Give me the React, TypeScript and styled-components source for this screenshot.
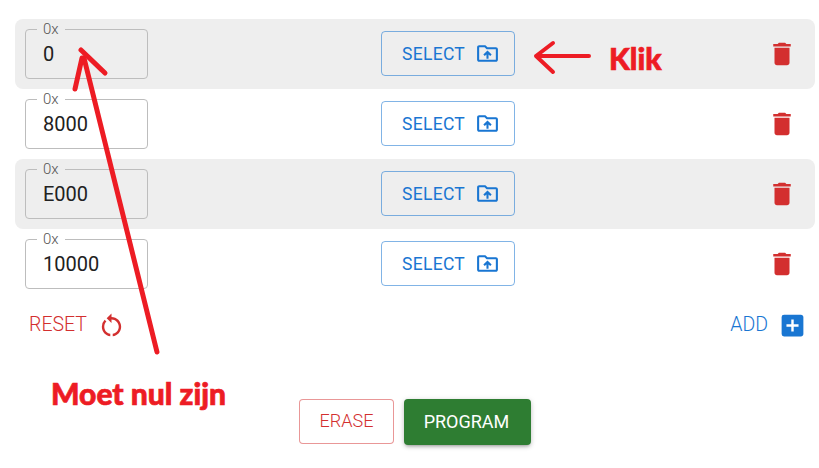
import React from 'react';
import styled, { createGlobalStyle } from 'styled-components';
import { MdAddBox, MdDelete, MdOutlineDriveFolderUpload, MdRestartAlt } from 'react-icons/md';

const GlobalStyle = createGlobalStyle`
    html, body {
        margin: 0;
        background: #fff;
    }
    body {
        font-family: Roboto, "Liberation Sans", sans-serif;
    }
`;

const colors = {
    blue: '#1976d2',
    red: '#d32f2f',
    green: '#2e7d32',
    grey: '#eeeeee',
};

const Page = styled.div`
    position: relative;
    width: 819px;
    height: 468px;
    overflow: hidden;
    padding: 19px 4px 0 15px;
    box-sizing: border-box;
`;

const Row = styled.div<{ $shaded?: boolean }>`
    display: flex;
    align-items: center;
    height: 70px;
    padding: 0 18px 0 10px;
    border-radius: 8px;
    background: ${p => (p.$shaded ? colors.grey : 'transparent')};
`;

const AddressField = styled.fieldset`
    align-self: flex-start;
    width: 123px;
    height: 58px;
    margin: 2px 0 0;
    padding: 0 0 0 12px;
    box-sizing: border-box;
    border: 1px solid #bdbdbd;
    border-radius: 4px;
    display: block;
`;

const AddressLegend = styled.legend`
    padding: 0 6px;
    margin-left: -1px;
    font-size: 15px;
    line-height: 16px;
    font-weight: 300;
    color: #555;
`;

const AddressInput = styled.input`
    display: block;
    width: 100%;
    height: 34px;
    margin: 0;
    padding: 0 0 1px 5px;
    box-sizing: border-box;
    border: 0;
    outline: 0;
    background: transparent;
    font-family: inherit;
    font-size: 20px;
    color: #212121;
`;

const SelectButton = styled.button`
    display: flex;
    align-items: center;
    gap: 10px;
    width: 134px;
    height: 45px;
    margin: 0 0 1px 233px;
    padding: 0 0 0 20px;
    box-sizing: border-box;
    border: 1px solid rgba(25, 118, 210, 0.55);
    border-radius: 4px;
    background: transparent;
    font-family: inherit;
    font-size: 17.5px;
    letter-spacing: 0.3px;
    color: ${colors.blue};
`;

const DeleteButton = styled.button`
    display: flex;
    margin-left: auto;
    padding: 0;
    border: 0;
    background: transparent;
    color: ${colors.red};
`;

const Actions = styled.div`
    display: flex;
    justify-content: space-between;
    align-items: center;
    height: 52px;
    margin-top: 0;
    padding: 0 8px 0 14px;
`;

const TextAction = styled.button<{ $color: string }>`
    display: flex;
    align-items: center;
    gap: 10px;
    padding: 0;
    border: 0;
    background: transparent;
    font-family: inherit;
    font-size: 19.5px;
    font-weight: 300;
    color: ${p => p.$color};
`;

const ActionLabel = styled.span`
    margin-top: -1px;
`;

const Footer = styled.div`
    display: flex;
    justify-content: center;
    gap: 10px;
    margin-top: 48px;
`;

const EraseButton = styled.button`
    width: 95px;
    height: 45px;
    padding: 0 0 2px;
    box-sizing: border-box;
    border: 1px solid rgba(211, 47, 47, 0.5);
    border-radius: 4px;
    background: #fff;
    font-family: inherit;
    font-size: 18px;
    font-weight: 300;
    color: ${colors.red};
`;

const ProgramButton = styled.button`
    width: 127px;
    height: 46px;
    padding: 0 2px 2px 0;
    border: 0;
    border-radius: 4px;
    background: ${colors.green};
    box-shadow: 0 3px 3px -2px rgba(0, 0, 0, 0.2), 0 2px 4px 0 rgba(0, 0, 0, 0.14), 0 1px 6px 0 rgba(0, 0, 0, 0.12);
    font-family: inherit;
    font-size: 18px;
    color: #fff;
`;

const Annotations = styled.svg`
    position: absolute;
    left: 0;
    top: 0;
    pointer-events: none;
`;

const Note = styled.span<{ $left: number; $top: number }>`
    position: absolute;
    left: ${p => p.$left}px;
    top: ${p => p.$top}px;
    font-family: Lato, "Liberation Sans", sans-serif;
    font-size: 30px;
    line-height: 32px;
    font-weight: 900;
    -webkit-text-stroke: 0.7px #ed1c24;
    color: #ed1c24;
    white-space: nowrap;
`;

const addresses = ['0', '8000', 'E000', '10000'];

export default function App() {
    return (
        <Page>
            <GlobalStyle />
            {addresses.map((address, i) => (
                <Row key={address} $shaded={i % 2 === 0}>
                    <AddressField>
                        <AddressLegend>0x</AddressLegend>
                        <AddressInput readOnly value={address} />
                    </AddressField>
                    <SelectButton>
                        SELECT
                        <MdOutlineDriveFolderUpload size={25} />
                    </SelectButton>
                    <DeleteButton>
                        <MdDelete size={30} />
                    </DeleteButton>
                </Row>
            ))}
            <Actions>
                <TextAction $color={colors.red}>
                    <ActionLabel>RESET</ActionLabel>
                    <MdRestartAlt size={29} />
                </TextAction>
                <TextAction $color={colors.blue}>
                    <ActionLabel>ADD</ActionLabel>
                    <MdAddBox size={29} />
                </TextAction>
            </Actions>
            <Footer>
                <EraseButton>ERASE</EraseButton>
                <ProgramButton>PROGRAM</ProgramButton>
            </Footer>

            <Annotations width="819" height="468" viewBox="0 0 819 468" fill="none" stroke="#ed1c24" strokeLinecap="round">
                <path d="M157 352 L84 58" strokeWidth="5" />
                <path d="M75 89 L82 58 M81 50 L105 73" strokeWidth="5" />
                <path d="M589 56 H536 M553 43 L536 56 L553 72" strokeWidth="4" strokeLinejoin="round" />
            </Annotations>
            <Note $left={609} $top={42}>Klik</Note>
            <Note $left={51} $top={377}>Moet nul zijn</Note>
        </Page>
    );
}
